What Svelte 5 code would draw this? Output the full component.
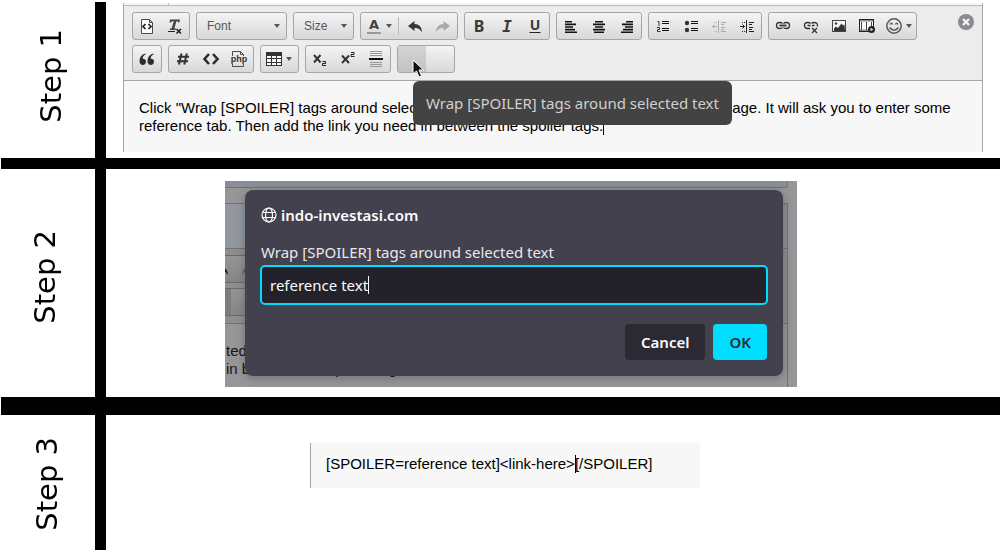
<script>
  const page = `<path d="M4.500 3.500h8l3 3v11h-11z M12.500 3.500v3h3" fill="#fafafa" stroke="#4a4a4a"/>`;
  const indentLines = `<path d="M9.500 4v13" stroke-width="1"/><path d="M12 6.500h5M12 8.500h3M12 11.500h4M12 13.500h3M12 15.500h5" stroke-width="1"/><path d="M5 6.500h1M7 6.500h1M5 15.500h1M7 15.500h1"/>`;

  const icons = {
    source: `${page}<path d="M8.500 8L6 10.500L8.500 13M11.500 8L14 10.500L11.500 13" fill="none" stroke="#222" stroke-width="1.7"/>`,
    removeFormat: `<path d="M5 3.500h10l-.7 3h-1.200l-.3-1.200h-1.300L9.300 12.500h1.700l-.3 1.500H4.800l.3-1.500h1.500L8.800 5.300H7l-1 1.200H4.500z" fill="#444"/><path d="M3 15.500h7" stroke="#222"/><path d="M11.500 13l4.500 4.500M16 13l-4.500 4.500" stroke="#222" stroke-width="1.6"/>`,
    color: `<text x="10" y="13" text-anchor="middle" font-size="13" font-weight="700" font-family="DejaVu Sans, sans-serif" fill="#444">A</text><rect x="3" y="16" width="14" height="2" fill="#999"/>`,
    undo: `<path d="M3 10L9.500 5v3C14 8 17 11 17 16.500C15 13 13 12 9.500 12v3z" fill="#383838"/>`,
    redo: `<path d="M17 10L10.500 5v3C6 8 3 11 3 16.500C5 13 7 12 10.500 12v3z" fill="#aaa"/>`,
    bold: `<text x="10" y="16" text-anchor="middle" font-size="16" font-weight="700" font-family="Noto Sans, sans-serif" fill="#3a3a3a">B</text>`,
    italic: `<text x="10" y="16" text-anchor="middle" font-size="16" font-weight="700" font-style="italic" font-family="DejaVu Sans Mono, monospace" fill="#3a3a3a">I</text>`,
    underline: `<text x="10" y="14" text-anchor="middle" font-size="14" font-weight="700" font-family="Noto Sans, sans-serif" fill="#3a3a3a">U</text><path d="M4.500 16.500h11" stroke="#222"/>`,
    left: `<path d="M4 5.800h7M4 8.400h11M4 11h8M4 13.600h10M4 16.200h12" stroke="#111" stroke-width="1.6"/>`,
    center: `<path d="M6 5.800h8M4 8.400h12M6 11h8M4 13.600h12M5 16.200h10" stroke="#111" stroke-width="1.6"/>`,
    right: `<path d="M9 5.800h7M5 8.400h11M8 11h8M6 13.600h10M4 16.200h12" stroke="#111" stroke-width="1.6"/>`,
    ordered: `<path d="M9 5.500h7M9 7.500h7M9 12.500h7M9 14.500h7" stroke="#111"/><path d="M4.500 5.500h1.500V10M4 11.500h2.500v2h-2v2h3" fill="none" stroke="#333"/>`,
    bullets: `<circle cx="6" cy="7" r="2.200" fill="#333"/><circle cx="6" cy="14" r="2.200" fill="#333"/><path d="M10 5.500h7M10 7.500h7M10 12.500h7M10 14.500h7" stroke="#111"/>`,
    outdent: `<g stroke="#aaa" fill="none">${indentLines}<path d="M8 10.500H3.500M5.500 8.500l-2 2l2 2"/></g>`,
    indent: `<g stroke="#222" fill="none">${indentLines}<path d="M3 10.500h4.500M5.500 8.500l2 2l-2 2"/></g>`,
    link: `<g fill="none" stroke="#333" stroke-width="1.300"><path d="M9.500 7.500C9 6.500 8 6.500 6.500 6.500C2.500 6.500 2.500 12.500 6.500 12.500C8 12.500 9 12.500 9.500 11.500M10.500 7.500C11 6.500 12 6.500 13.500 6.500C17.500 6.500 17.500 12.500 13.500 12.500C12 12.500 11 12.500 10.500 11.500"/><path d="M6.500 9.500h7" stroke-width="1.800"/></g>`,
    unlink: `<g fill="none" stroke="#333" stroke-width="1.300"><path d="M9.500 7.500C9 6.500 8 6.500 6.500 6.500C2.500 6.500 2.500 12.500 6.500 12.500h2.500M10.500 7.500C11 6.500 12 6.500 13.500 6.500C16 6.500 17 8.500 16.200 10.500"/><path d="M6.500 9.500h3M11 9.500h2.500M11 12l5 5M16 12l-5 5"/></g>`,
    image: `<rect x="3.500" y="4.500" width="13" height="11" fill="#f6f6f6" stroke="#444"/><circle cx="7" cy="7.500" r="1.300" fill="#444"/><path d="M5 15v-2.500l2-2l2 1.500l3.500-4.500L14 9.500l1.500-1L16 15z" fill="#333"/>`,
    media: `<rect x="2.500" y="3.500" width="14" height="12" fill="#f8f8f8" stroke="#222"/><path d="M3.500 4.500h13M3.500 14.500h8" stroke="#222" stroke-width="2" stroke-dasharray="1 1"/><path d="M9.500 6v8M4.500 6v8M14.500 6v4" stroke="#444"/><circle cx="14.500" cy="13.500" r="3.500" fill="#222"/><path d="M13.500 11.700l3 1.800l-3 1.800z" fill="#ddd"/>`,
    smilie: `<circle cx="10" cy="10" r="7.200" fill="none" stroke="#555" stroke-width="1.500"/><path d="M5.500 11.500q4.500 5.500 9 0" fill="none" stroke="#555" stroke-width="1.500"/><path d="M6 8.500q1.300-2.500 2.600 0M11.400 8.500q1.300-2.500 2.600 0" fill="none" stroke="#555" stroke-width="1.400"/>`,
    quote: `<path d="M8.500 4.500C4.500 5.500 2.500 8.500 2.500 12C2.500 17.500 9 16.800 9 12.700C9 10.500 7.500 9.500 5.700 9.700C5.700 7.800 6.800 6.300 8.800 5.300zM16.500 4.500C12.500 5.500 10.500 8.500 10.500 12C10.500 17.500 17 16.800 17 12.700C17 10.500 15.500 9.500 13.700 9.700C13.700 7.800 14.800 6.300 16.800 5.300z" fill="#2c2c2c"/>`,
    hash: `<path d="M8.500 4.500L6 15.500M13.800 4.500L11.300 15.500M5 7.800h11M4 12.300h11" stroke="#333" stroke-width="2"/>`,
    code: `<path d="M8 5L3.500 10L8 15M12 5l4.500 5L12 15" fill="none" stroke="#2c2c2c" stroke-width="2.600"/>`,
    php: `<path d="M3.500 7V2.500h8l3 3V7M3.500 15v2.500h11V15M11.500 2.500v3h3" fill="none" stroke="#4a4a4a"/><text x="10" y="13" text-anchor="middle" font-size="9" font-weight="700" font-family="Liberation Sans, sans-serif" fill="#333">php</text>`,
    table: `<rect x="2.500" y="3.500" width="15" height="13" fill="#f8f8f8" stroke="#333"/><path d="M2 5h16" stroke="#333" stroke-width="4"/><path d="M2.500 9.500h15M2.500 13.500h15M7.500 6v10M12.500 6v10" stroke="#333"/>`,
    sub: `<path d="M4 6l6.500 7.500M10.500 6L4 13.500" stroke="#333" stroke-width="2"/><path d="M12.500 12.500h3v2h-3v2h3.500" fill="none" stroke="#222"/>`,
    sup: `<path d="M4 6.500l7 7.500M11 6.500L4 14" stroke="#333" stroke-width="2"/><path d="M13 3.500h3v2h-3v2h3.500" fill="none" stroke="#222"/>`,
    hr: `<path d="M4 2.500h12M4 4.500h12M4 6.500h12M4 13.500h12M4 15.500h12M4 17.500h12" stroke="#999"/><path d="M3 10h14" stroke="#111" stroke-width="2"/>`,
  };

  const fontGroup = [["source", "removeFormat"]];
  const formatGroups = [
    ["bold", "italic", "underline"],
    ["left", "center", "right"],
    ["ordered", "bullets", "outdent", "indent"],
    ["link", "unlink", "image", "media", "smilie"],
  ];
  const insertGroups = [["quote"], ["hash", "code", "php"], ["table"], ["sub", "sup", "hr"]];
  const menus = ["color", "smilie", "table"];
</script>

{#snippet icon(name)}
  <svg width="20" height="20" viewBox="0 0 20 20" fill="none">{@html icons[name]}</svg>
{/snippet}

{#snippet tool(name)}
  <button class="tool {name}" class:menu={menus.includes(name)} type="button" aria-label={name}>
    {@render icon(name)}
    {#if menus.includes(name)}<i class="arrow"></i>{/if}
  </button>
{/snippet}

{#snippet groups(list)}
  {#each list as group}
    <div class="group">
      {#each group as name}
        {@render tool(name)}
      {/each}
    </div>
  {/each}
{/snippet}

<main>
  <section class="step first">
    <h2><span>Step 1</span></h2>
    <div class="content">
      <div class="editor">
        <div class="strip"></div>
        <div class="toolbar">
          <div class="row">
            {@render groups(fontGroup)}
            <div class="group">
              <select class="font" aria-label="Font"><option>Font</option></select>
              <i class="arrow"></i>
            </div>
            <div class="group">
              <select class="size" aria-label="Size"><option>Size</option></select>
              <i class="arrow"></i>
            </div>
            <div class="group">
              {@render tool("color")}
              <span class="divider"></span>
              {@render tool("undo")}
              {@render tool("redo")}
            </div>
            {@render groups(formatGroups)}
            <button class="close" type="button" aria-label="Close">
              <svg width="16" height="16" viewBox="0 0 16 16">
                <circle cx="8" cy="8" r="8" fill="#898b8e" />
                <path d="M5 5l6 6M11 5l-6 6" stroke="#f4f4f4" stroke-width="2.400" />
              </svg>
            </button>
          </div>
          <div class="row">
            {@render groups(insertGroups)}
            <div class="group">
              <div class="hovered">
                <button class="tool active" type="button" aria-label="Wrap spoiler"></button>
                <div class="tooltip" role="tooltip">Wrap [SPOILER] tags around selected text</div>
                <svg class="cursor" width="14" height="20" viewBox="0 0 14 20">
                  <path d="M1 1v14l3.500-3l2.500 6l2.500-1l-2.500-6h4.500z" fill="#111" stroke="#fff" />
                </svg>
              </div>
              <button class="tool" type="button" aria-label="Spoiler"></button>
            </div>
          </div>
        </div>
        <p class="message">
          Click "Wrap [SPOILER] tags around selected text" button when you are writing your message. It will ask you
          to enter some reference tab. Then add the link you need in between the spoiler tags.<span class="caret"></span>
        </p>
      </div>
    </div>
  </section>

  <section class="step second">
    <h2><span>Step 2</span></h2>
    <div class="content">
      <div class="scene">
        <div class="backdrop">
          <div class="tab"></div>
          <div class="panel">
            <div class="title"></div>
            <div class="tools">
              <div class="shade">
                {@render icon("undo")}
                {@render icon("redo")}
              </div>
              <div class="shade"><span class="pressed"></span></div>
            </div>
            <p>ted text<br />in between the spoiler tags.</p>
          </div>
        </div>
        <form class="dialog" onsubmit={(e) => e.preventDefault()}>
          <h3>
            <svg width="16" height="16" viewBox="0 0 16 16" fill="none" stroke="#fbfbfe" stroke-width="1.200">
              <circle cx="8" cy="8" r="7" />
              <ellipse cx="8" cy="8" rx="3.500" ry="7" />
              <path d="M1.500 5.500h13M1.500 10.500h13" />
            </svg>
            indo-investasi.com
          </h3>
          <label for="reference">Wrap [SPOILER] tags around selected text</label>
          <div class="field">
            <input id="reference" type="text" value="reference text" />
            <span class="caret"></span>
          </div>
          <div class="actions">
            <button type="button">Cancel</button>
            <button class="primary" type="submit">OK</button>
          </div>
        </form>
      </div>
    </div>
  </section>

  <section class="step third">
    <h2><span>Step 3</span></h2>
    <div class="content">
      <p class="result">[SPOILER=reference text]&lt;link-here&gt;<span class="caret"></span>[/SPOILER]</p>
    </div>
  </section>
</main>

<style>
  :global(body) {
    background: #fff;
  }

  main {
    min-height: 100vh;
    box-sizing: border-box;
    padding: 2px 0 0 1px;
    display: flex;
    flex-direction: column;
    font-family: "Liberation Sans", Arial, sans-serif;
    color: #000;
  }

  h2,
  h3,
  p {
    margin: 0;
  }

  button,
  select,
  input {
    font: inherit;
    margin: 0;
    padding: 0;
    border: 0;
    background: none;
  }

  .step {
    display: flex;
    border-bottom: 11px solid #000;
  }

  .second {
    border-bottom-width: 18px;
  }

  .third {
    flex: 1;
    border-bottom: 0;
  }

  h2 {
    flex: none;
    box-sizing: border-box;
    width: 105px;
    border-right: 11px solid #000;
    display: flex;
    align-items: center;
    justify-content: center;
    font: 400 29px/32px "DejaVu Sans", sans-serif;
  }

  .first h2 {
    padding: 0 0 8px 6px;
  }

  .second h2 {
    padding: 0 6px 12px 0;
  }

  .third h2 {
    padding: 2px 2px 0 0;
  }

  h2 span {
    writing-mode: vertical-rl;
    transform: rotate(180deg);
  }

  .content {
    flex: 1;
    min-width: 0;
  }

  .first .content {
    padding: 1px 17px 6px;
  }

  .second .content {
    padding: 12px 119px 10px;
  }

  .third .content {
    padding: 28px 204px;
  }

  .editor {
    border: solid #a3a7a9;
    border-width: 0 1px;
    background: #f7f7f7;
  }

  .strip {
    height: 2px;
    width: 44px;
    background: #f4f8fc;
    border-right: 1px solid #bcc2c6;
  }

  .toolbar {
    display: flex;
    flex-direction: column;
    gap: 5px;
    padding: 6px 8px 7px;
    background: #ececec;
    border-top: 1px solid #b4babe;
    border-bottom: 1px solid #a3a7a9;
  }

  .row {
    display: flex;
    gap: 6px;
  }

  .group {
    position: relative;
    display: flex;
    align-items: center;
    height: 26px;
    border: 1px solid #a6a6a6;
    border-radius: 3px;
    background: linear-gradient(#f4f4f4, #d8d8d8);
  }

  .tool {
    display: flex;
    align-items: center;
    justify-content: center;
    width: 28px;
    height: 26px;
  }

  .menu {
    justify-content: flex-start;
    box-sizing: border-box;
    width: 37px;
    padding-left: 3px;
    gap: 2px;
  }

  .smilie {
    width: 35px;
  }

  .tool svg {
    flex: none;
  }

  .arrow {
    flex: none;
    width: 0;
    border: solid transparent;
    border-width: 4px 3px 0;
    border-top-color: #555;
  }

  .group > .arrow {
    position: absolute;
    right: 6px;
    pointer-events: none;
  }

  .divider {
    width: 1px;
    height: 18px;
    margin-right: 2px;
    background: #bbb;
  }

  select {
    appearance: none;
    height: 26px;
    padding-left: 10px;
    font-size: 12px;
    color: #555;
  }

  .font {
    width: 89px;
  }

  .size {
    width: 59px;
  }

  .close {
    height: 16px;
    margin: 2px 0 0 auto;
  }

  .close svg {
    display: block;
  }

  .hovered {
    position: relative;
  }

  .active {
    background: linear-gradient(#d4d4d4, #c2c2c2);
  }

  .tooltip {
    position: absolute;
    top: 35px;
    left: 15px;
    padding: 11px 13px;
    border-radius: 6px;
    background: #434343;
    color: #d0d0d0;
    font: 15px/22px "Noto Sans", sans-serif;
    white-space: nowrap;
  }

  .cursor {
    position: absolute;
    top: 13px;
    left: 14px;
  }

  .message,
  .result {
    padding: 18px 15px 17px;
    font-size: 15px;
    line-height: 18px;
  }

  .caret {
    display: inline-block;
    width: 1px;
    height: 18px;
    margin-right: -1px;
    background: currentColor;
    vertical-align: top;
  }

  .scene {
    display: grid;
    max-width: 572px;
    background: #969698;
    overflow: hidden;
  }

  .backdrop,
  .dialog {
    grid-area: 1 / 1;
  }

  .backdrop {
    height: 206px;
    padding-right: 9px;
    overflow: hidden;
    color: #151515;
  }

  .tab {
    height: 6px;
    border: solid #707274;
    border-width: 0 1px 1px 0;
    border-radius: 0 0 3px 0;
    background: #8a8e96;
  }

  .panel {
    margin-top: 15px;
    border: solid #707274;
    border-width: 1px 1px 0 0;
    height: 200px;
  }

  .title {
    height: 44px;
    background: linear-gradient(90deg, #92979f, #8e8f93);
    border-bottom: 1px solid #707274;
  }

  .tools {
    display: flex;
    flex-direction: column;
    gap: 5px;
    padding: 6px 0 7px;
    background: #8e8e90;
    border-bottom: 1px solid #707274;
  }

  .shade {
    display: flex;
    align-items: center;
    gap: 8px;
    width: 60px;
    height: 26px;
    border: solid #6a6a6c;
    border-width: 1px 0;
    background: linear-gradient(#949496, #868688);
  }

  .shade svg {
    flex: none;
    filter: brightness(0.6);
  }

  .shade svg:first-child {
    margin-left: -14px;
  }

  .pressed {
    width: 6px;
    height: 26px;
    background: #7c7c7e;
  }

  .panel p {
    padding: 18px 0 0 1px;
    font-size: 15px;
    line-height: 18px;
  }

  .dialog {
    z-index: 1;
    margin: 9px 14px 11px 20px;
    padding: 14px 16px 16px;
    border-radius: 8px;
    background: #42414d;
    color: #fbfbfe;
    box-shadow: 0 2px 10px rgba(0, 0, 0, 0.25);
    display: flex;
    flex-direction: column;
    font: 15px/22px "Noto Sans", sans-serif;
  }

  h3 {
    display: flex;
    align-items: center;
    gap: 4px;
    font-size: 15px;
    font-weight: 600;
  }

  .dialog label {
    margin: 15px 0 2px;
    color: #e8e8ee;
  }

  .field {
    display: flex;
    align-items: center;
    height: 36px;
    margin: 0 -1px;
    padding: 0 8px;
    border: 2px solid #00ddff;
    border-radius: 5px;
    background: #23222b;
  }

  .field input {
    field-sizing: content;
    color: #fbfbfe;
    outline: 0;
  }

  .actions {
    display: flex;
    justify-content: flex-end;
    gap: 8px;
    margin-top: 19px;
  }

  .actions button {
    height: 36px;
    padding: 0 16px;
    border-radius: 4px;
    background: #2b2a33;
    color: #fbfbfe;
    font-weight: 600;
  }

  .actions .primary {
    background: #00ddff;
    color: #2b2a33;
  }

  .result {
    max-width: 359px;
    padding: 12px 15px 15px;
    border-left: 1px solid #a6a6a6;
    background: #f7f7f7;
  }
</style>
